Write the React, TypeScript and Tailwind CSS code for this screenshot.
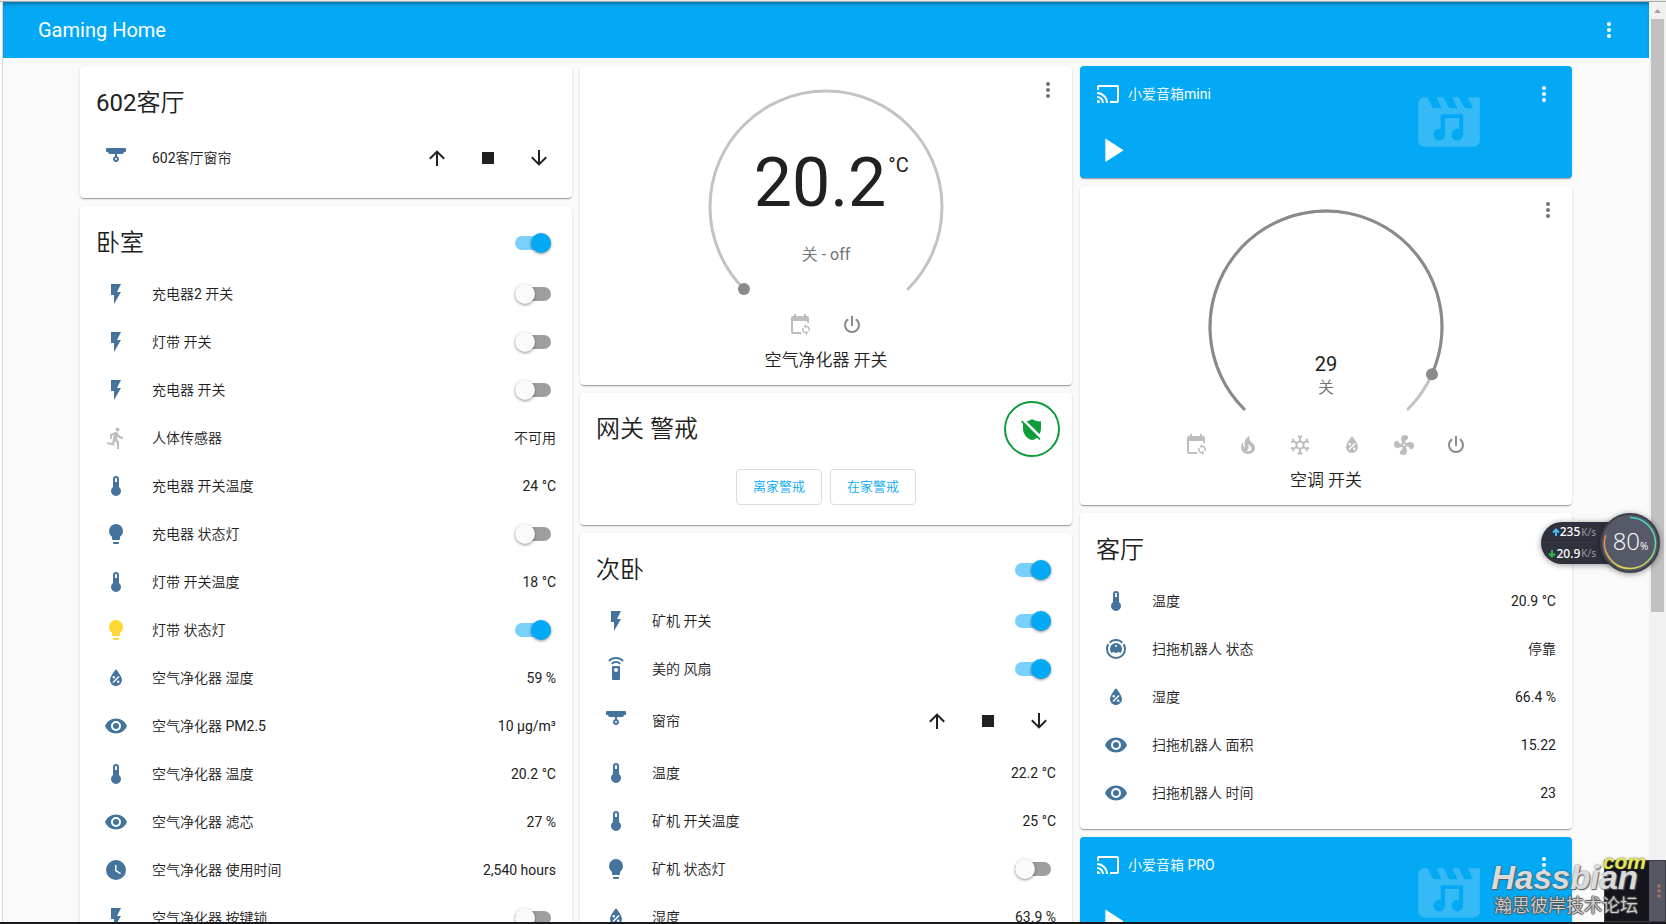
import React, { useState } from "react";

const ICONS = {
  flash: "M7,2V13H10V22L17,10H13L17,2H7Z",
  thermometer:
    "M15 13V5A3 3 0 0 0 9 5V13A5 5 0 1 0 15 13M12 4A1 1 0 0 1 13 5V8H11V5A1 1 0 0 1 12 4Z",
  bulb: "M12,2A7,7 0 0,0 5,9C5,11.38 6.19,13.47 8,14.74V17A1,1 0 0,0 9,18H15A1,1 0 0,0 16,17V14.74C17.81,13.47 19,11.38 19,9A7,7 0 0,0 12,2M9,21A1,1 0 0,0 10,22H14A1,1 0 0,0 15,21V20H9V21Z",
  water:
    "M12,3.25C12,3.25 6,10 6,14C6,17.32 8.69,20 12,20A6,6 0 0,0 18,14C18,10 12,3.25 12,3.25M14.47,9.97L15.53,11.03L9.53,17.03L8.47,15.97M9.75,10A1.25,1.25 0 0,1 11,11.25A1.25,1.25 0 0,1 9.75,12.5A1.25,1.25 0 0,1 8.5,11.25A1.25,1.25 0 0,1 9.75,10M14.25,14.5A1.25,1.25 0 0,1 15.5,15.75A1.25,1.25 0 0,1 14.25,17A1.25,1.25 0 0,1 13,15.75A1.25,1.25 0 0,1 14.25,14.5Z",
  eye: "M12,9A3,3 0 0,0 9,12A3,3 0 0,0 12,15A3,3 0 0,0 15,12A3,3 0 0,0 12,9M12,17A5,5 0 0,1 7,12A5,5 0 0,1 12,7A5,5 0 0,1 17,12A5,5 0 0,1 12,17M12,4.5C7,4.5 2.73,7.61 1,12C2.73,16.39 7,19.5 12,19.5C17,19.5 21.27,16.39 23,12C21.27,7.61 17,4.5 12,4.5Z",
  clock:
    "M12,2A10,10 0 0,0 2,12A10,10 0 0,0 12,22A10,10 0 0,0 22,12A10,10 0 0,0 12,2M16.2,16.2L11,13V7H12.5V12.2L17,14.9L16.2,16.2Z",
  run: "M13.5,5.5C14.59,5.5 15.5,4.58 15.5,3.5C15.5,2.38 14.59,1.5 13.5,1.5C12.39,1.5 11.5,2.38 11.5,3.5C11.5,4.58 12.39,5.5 13.5,5.5M9.89,19.38L10.89,15L13,17V23H15V15.5L12.89,13.5L13.5,10.5C14.79,12 16.79,13 19,13V11C17.09,11 15.5,10 14.69,8.58L13.69,7C13.29,6.38 12.69,6 12,6C11.69,6 11.5,6.08 11.19,6.08L6,8.28V13H8V9.58L9.79,8.88L8.19,17L3.29,16L2.89,18L9.89,19.38Z",
  remote:
    "M12,0C8.96,0 6.21,1.23 4.22,3.22L5.63,4.63C7.26,3 9.5,2 12,2C14.5,2 16.74,3 18.36,4.64L19.77,3.23C17.79,1.23 15.04,0 12,0M7.05,6.05L8.46,7.46C9.37,6.56 10.62,6 12,6C13.38,6 14.63,6.56 15.54,7.46L16.95,6.05C15.68,4.78 13.93,4 12,4C10.07,4 8.32,4.78 7.05,6.05M12,15A2,2 0 0,1 10,13A2,2 0 0,1 12,11A2,2 0 0,1 14,13A2,2 0 0,1 12,15M15,9H9A1,1 0 0,0 8,10V22A1,1 0 0,0 9,23H15A1,1 0 0,0 16,22V10A1,1 0 0,0 15,9Z",
  blinds:
    "M3,2H21A1,1 0 0,1 22,3V5A1,1 0 0,1 21,6H20A2,2 0 0,1 18,8H13V10.17A3,3 0 1,1 11,10.17V8H6A2,2 0 0,1 4,6H3A1,1 0 0,1 2,5V3A1,1 0 0,1 3,2M12,12A1,1 0 0,0 11,13A1,1 0 0,0 12,14A1,1 0 0,0 13,13A1,1 0 0,0 12,12Z",
  vacuum:
    "M12,2C14.65,2 17.19,3.06 19.07,4.93L17.65,6.35C16.15,4.85 14.12,4 12,4C9.88,4 7.84,4.84 6.35,6.35L4.93,4.93C6.81,3.06 9.35,2 12,2M3.66,6.5L5.11,7.94C4.39,9.17 4,10.57 4,12A8,8 0 0,0 12,20A8,8 0 0,0 20,12C20,10.57 19.61,9.17 18.88,7.94L20.34,6.5C21.42,8.12 22,10.04 22,12A10,10 0 0,1 12,22A10,10 0 0,1 2,12C2,10.04 2.58,8.12 3.66,6.5M12,6A6,6 0 0,1 18,12C18,13.59 17.37,15.12 16.24,16.24L14.83,14.83C14.08,15.58 13.06,16 12,16C10.94,16 9.92,15.58 9.17,14.83L7.76,16.24C6.63,15.12 6,13.59 6,12A6,6 0 0,1 12,6M12,8A1,1 0 0,0 11,9A1,1 0 0,0 12,10A1,1 0 0,0 13,9A1,1 0 0,0 12,8Z",
  up: "M13,20H11V8L5.5,13.5L4.08,12.08L12,4.16L19.92,12.08L18.5,13.5L13,8V20Z",
  down: "M11,4H13V16L18.5,10.5L19.92,11.92L12,19.84L4.08,11.92L5.5,10.5L11,16V4Z",
  stop: "M18,18H6V6H18V18Z",
  calendar:
    "M18 11V12.5C21.19 12.5 23.09 16.05 21.33 18.71L20.24 17.62C21.06 15.96 19.85 14 18 14V15.5L15.75 13.25L18 11M18 22V20.5C14.81 20.5 12.91 16.95 14.67 14.29L15.76 15.38C14.94 17.04 16.15 19 18 19V17.5L20.25 19.75L18 22M19 3H18V1H16V3H8V1H6V3H5C3.89 3 3 3.9 3 5V19C3 20.11 3.9 21 5 21H14C13.36 20.45 12.86 19.77 12.5 19H5V8H19V9.59C19.71 9.7 20.39 9.94 21 10.31V5C21 3.9 20.11 3 19 3Z",
  fire: "M17.66 11.2C17.43 10.9 17.15 10.64 16.89 10.38C16.22 9.78 15.46 9.35 14.82 8.72C13.33 7.26 13 4.85 13.95 3C13 3.23 12.17 3.75 11.46 4.32C8.87 6.4 7.85 10.07 9.07 13.22C9.11 13.32 9.15 13.42 9.15 13.55C9.15 13.77 9 13.97 8.8 14.05C8.57 14.15 8.33 14.09 8.14 13.93C8.08 13.88 8.04 13.83 8 13.76C6.87 12.33 6.69 10.28 7.45 8.64C5.78 10 4.87 12.3 5 14.47C5.06 14.97 5.12 15.47 5.29 15.97C5.43 16.57 5.7 17.17 6 17.7C7.08 19.43 8.95 20.67 10.96 20.92C13.1 21.19 15.39 20.8 17.03 19.32C18.86 17.66 19.5 15 18.56 12.72L18.43 12.46C18.22 12 17.66 11.2 17.66 11.2M14.5 17.5C14.22 17.74 13.76 18 13.4 18.1C12.28 18.5 11.16 17.94 10.5 17.28C11.69 17 12.4 16.12 12.61 15.23C12.78 14.43 12.46 13.77 12.33 13C12.21 12.26 12.23 11.63 12.5 10.94C12.69 11.32 12.89 11.7 13.13 12C13.9 13 15.11 13.44 15.37 14.8C15.41 14.94 15.43 15.08 15.43 15.23C15.46 16.05 15.1 16.95 14.5 17.5H14.5Z",
  snow: "M20.79,13.95L18.46,14.57L16.46,13.44V10.56L18.46,9.43L20.79,10.05L21.31,8.12L19.54,7.65L20,5.88L18.07,5.36L17.45,7.69L15.45,8.82L13,7.38V5.12L14.71,3.41L13.29,2L12,3.29L10.71,2L9.29,3.41L11,5.12V7.38L8.5,8.82L6.5,7.69L5.92,5.36L4,5.88L4.47,7.65L2.7,8.12L3.22,10.05L5.55,9.43L7.55,10.56V13.45L5.55,14.58L3.22,13.96L2.7,15.89L4.47,16.36L4,18.12L5.93,18.64L6.55,16.31L8.55,15.18L11,16.62V18.88L9.29,20.59L10.71,22L12,20.71L13.29,22L14.7,20.59L13,18.88V16.62L15.5,15.17L17.5,16.3L18.12,18.63L20,18.12L19.53,16.35L21.3,15.88L20.79,13.95M9.5,10.56L12,9.11L14.5,10.56V13.44L12,14.89L9.5,13.44V10.56Z",
  fan: "M12,11A1,1 0 0,0 11,12A1,1 0 0,0 12,13A1,1 0 0,0 13,12A1,1 0 0,0 12,11M12.5,2C17,2 17.11,5.57 14.75,6.75C13.76,7.24 13.32,8.29 13.13,9.22C13.61,9.42 14.03,9.73 14.35,10.13C18.05,8.13 22.03,8.92 22.03,12.5C22.03,17 18.46,17.1 17.28,14.73C16.78,13.74 15.72,13.3 14.79,13.11C14.59,13.59 14.28,14 13.88,14.34C15.87,18.03 15.08,22 11.5,22C7,22 6.91,18.42 9.27,17.24C10.25,16.75 10.69,15.71 10.89,14.79C10.4,14.59 9.97,14.27 9.65,13.87C5.96,15.85 2,15.07 2,11.5C2,7 5.56,6.89 6.74,9.26C7.24,10.25 8.29,10.68 9.22,10.87C9.41,10.39 9.73,9.97 10.14,9.65C8.15,5.96 8.94,2 12.5,2Z",
  power:
    "M16.56,5.44L15.11,6.89C16.84,7.94 18,9.83 18,12A6,6 0 0,1 12,18A6,6 0 0,1 6,12C6,9.83 7.16,7.94 8.88,6.88L7.44,5.44C5.36,6.88 4,9.28 4,12A8,8 0 0,0 12,20A8,8 0 0,0 20,12C20,9.28 18.64,6.88 16.56,5.44M13,3H11V13H13",
  shieldOff:
    "M12,2C14,3.6 17,4.5 21,4.5V11C21,13.3 20.5,15.4 19.4,17.1L6.4,4.3C8.5,4 10.5,3.2 12,2M1,4.8L2.3,3.5L20.5,21.7L19.2,23L17,20.8C15.6,22 13.9,22.8 12,23C7,22 3,17 3,11.5V6.8Z",
  cast: "M1,10V12A9,9 0 0,1 10,21H12C12,14.92 7.07,10 1,10M1,14V16A5,5 0 0,1 6,21H8A7,7 0 0,0 1,14M1,18V21H4A3,3 0 0,0 1,18M21,3H3C1.89,3 1,3.89 1,5V8H3V5H21V19H14V21H21A2,2 0 0,0 23,19V5C23,3.89 22.1,3 21,3Z",
  play: "M8,5.14V19.14L19,12.14L8,5.14Z",
  dots: "M12,16A2,2 0 0,1 14,18A2,2 0 0,1 12,20A2,2 0 0,1 10,18A2,2 0 0,1 12,16M12,10A2,2 0 0,1 14,12A2,2 0 0,1 12,14A2,2 0 0,1 10,12A2,2 0 0,1 12,10M12,4A2,2 0 0,1 14,6A2,2 0 0,1 12,8A2,2 0 0,1 10,6A2,2 0 0,1 12,4Z",
  movieMusic:
    "M18,4L19.8,7.5H17L15.2,4H13L14.8,7.5H12L10.2,4H8L9.6,7.5H6.8L5,4H4A2,2 0 0,0 2,6V18A2,2 0 0,0 4,20H20A2,2 0 0,0 22,18V4H18M9.3,9.5H16.6V16A1.9,1.9 0 1,1 15.3,14.3V10.7H10.7V16A1.9,1.9 0 1,1 9.3,14.3V9.5Z",
};

type IconName = keyof typeof ICONS;

function Icon({ name, className = "size-6" }: { name: IconName; className?: string }) {
  return (
    <svg viewBox="0 0 24 24" className={`shrink-0 fill-current ${className}`} aria-hidden="true">
      <path fillRule={name === "movieMusic" ? "evenodd" : "nonzero"} d={ICONS[name]} />
    </svg>
  );
}

function Card({ children, className = "bg-white" }: { children: React.ReactNode; className?: string }) {
  return (
    <section
      className={`relative rounded-[4px] shadow-[0_2px_1px_-1px_rgba(0,0,0,0.2),0_1px_1px_0_rgba(0,0,0,0.14),0_1px_3px_0_rgba(0,0,0,0.12)] ${className}`}
    >
      {children}
    </section>
  );
}

function Toggle({ label, initial }: { label: string; initial: boolean }) {
  const [on, setOn] = useState(initial);
  return (
    <label className="relative mr-[5px] flex h-5 w-9 shrink-0 cursor-pointer items-center">
      <input
        type="checkbox"
        className="peer sr-only"
        checked={on}
        onChange={() => setOn(!on)}
        aria-label={label}
      />
      <span className="h-[14px] w-9 rounded-full bg-[#9e9e9e] peer-checked:bg-[#79d1fa]" />
      <span className="absolute left-0 size-5 rounded-full bg-[#fafafa] shadow-[0_1px_3px_rgba(0,0,0,0.45)] peer-checked:left-4 peer-checked:bg-[#03a9f4]" />
    </label>
  );
}

function CardTitle({ title, toggle }: { title: string; toggle?: boolean }) {
  return (
    <header className="flex h-[68px] items-center justify-between px-4 pt-[6px]">
      <h2 className="text-2xl font-normal">{title}</h2>
      {toggle && <Toggle label={title} initial />}
    </header>
  );
}

type Row = {
  icon: IconName;
  name: string;
  state?: string;
  on?: boolean;
  cover?: boolean;
  tone?: string;
};

function CoverControls({ name }: { name: string }) {
  const actions: [IconName, string][] = [
    ["up", "打开"],
    ["stop", "停止"],
    ["down", "关闭"],
  ];
  return (
    <div className="-mr-[7px] flex gap-[3px]">
      {actions.map(([icon, label]) => (
        <button key={icon} type="button" aria-label={`${name} ${label}`} className="grid size-12 place-items-center">
          <Icon name={icon} />
        </button>
      ))}
    </div>
  );
}

function EntityRow({ row }: { row: Row }) {
  return (
    <li className="flex min-h-10 items-center text-sm">
      <span className={`grid w-10 shrink-0 place-items-center ${row.tone ?? "text-[#44739e]"}`}>
        <Icon name={row.icon} />
      </span>
      <span className="min-w-0 flex-1 truncate pl-4">{row.name}</span>
      {row.cover && <CoverControls name={row.name} />}
      {row.state && <span>{row.state}</span>}
      {row.on !== undefined && <Toggle label={row.name} initial={row.on} />}
    </li>
  );
}

function EntitiesCard({ title, toggle, rows }: { title: string; toggle?: boolean; rows: Row[] }) {
  return (
    <Card>
      <CardTitle title={title} toggle={toggle} />
      <ul className="flex flex-col gap-2 px-4 pb-4">
        {rows.map((row) => (
          <EntityRow key={row.name} row={row} />
        ))}
      </ul>
    </Card>
  );
}

function MenuButton({ className = "" }: { className?: string }) {
  return (
    <button type="button" aria-label="更多" className={`grid size-12 place-items-center ${className}`}>
      <Icon name="dots" />
    </button>
  );
}

const R = 116;
const CENTER = 117;

function polar(degrees: number) {
  const a = (degrees * Math.PI) / 180;
  return { x: CENTER + R * Math.cos(a), y: CENTER + R * Math.sin(a) };
}

function arc(from: number, to: number) {
  const a = polar(from);
  const b = polar(to);
  return `M${a.x} ${a.y}A${R} ${R} 0 ${to - from > 180 ? 1 : 0} 1 ${b.x} ${b.y}`;
}

function ThermostatCard({
  name,
  knob,
  modes,
  children,
}: {
  name: string;
  knob: number;
  modes: [IconName, string][];
  children: React.ReactNode;
}) {
  const k = polar(knob);
  return (
    <Card>
      <MenuButton className="absolute top-0 right-0 text-[#727272]" />
      <div className="flex flex-col items-center pt-6 pb-[14px]">
        <div className="grid h-[211px] w-[234px]">
          <svg
            viewBox="0 0 234 211"
            className="col-start-1 row-start-1 h-[211px] w-[234px] overflow-visible"
            fill="none"
            strokeWidth="3"
            strokeLinecap="round"
            aria-hidden="true"
          >
            <path d={arc(135, 405)} stroke="#c3c3c3" />
            {knob > 135 && <path d={arc(135, knob)} stroke="#8a8a8a" />}
            <circle cx={k.x} cy={k.y} r="6" fill="#8a8a8a" />
          </svg>
          <div className="col-start-1 row-start-1 flex flex-col items-center">{children}</div>
        </div>
        <div className="flex gap-1">
          {modes.map(([icon, label], i) => (
            <button
              key={icon}
              type="button"
              aria-label={label}
              className={`grid size-12 place-items-center ${i === modes.length - 1 ? "text-[#8a8a8a]" : "text-[#bdbdbd]"}`}
            >
              <Icon name={icon} />
            </button>
          ))}
        </div>
        <h3 className="text-[17px] leading-[22px] font-normal">{name}</h3>
      </div>
    </Card>
  );
}

function MediaCard({ name }: { name: string }) {
  return (
    <Card className="h-28 bg-[#03a9f4] text-white">
      <Icon name="movieMusic" className="absolute top-[19px] right-[86px] size-[74px] opacity-20" />
      <div className="flex items-center pt-1 pl-4">
        <Icon name="cast" />
        <span className="flex-1 pl-2 text-sm">{name}</span>
        <MenuButton className="mr-1" />
      </div>
      <button type="button" aria-label={`播放 ${name}`} className="mt-3 ml-3 block">
        <Icon name="play" className="size-10" />
      </button>
    </Card>
  );
}

function AlarmCard() {
  return (
    <Card className="flex h-[132px] flex-col bg-white">
      <header className="flex items-center justify-between pt-2 pr-3 pl-4">
        <h2 className="text-2xl font-normal">网关 警戒</h2>
        <span className="grid size-14 place-items-center rounded-full border-2 border-[#0f9d3a] text-[#0f9d3a]">
          <Icon name="shieldOff" />
        </span>
      </header>
      <div className="mt-3 flex justify-center gap-2">
        {["离家警戒", "在家警戒"].map((label) => (
          <button
            key={label}
            type="button"
            className="h-9 rounded-[4px] border border-[#dcdcdc] px-4 text-[13px] text-[#03a9f4]"
          >
            {label}
          </button>
        ))}
      </div>
    </Card>
  );
}

const livingCurtain: Row[] = [{ icon: "blinds", name: "602客厅窗帘", cover: true }];

const bedroom: Row[] = [
  { icon: "flash", name: "充电器2 开关", on: false },
  { icon: "flash", name: "灯带 开关", on: false },
  { icon: "flash", name: "充电器 开关", on: false },
  { icon: "run", name: "人体传感器", state: "不可用", tone: "text-[#bdbdbd]" },
  { icon: "thermometer", name: "充电器 开关温度", state: "24 °C" },
  { icon: "bulb", name: "充电器 状态灯", on: false },
  { icon: "thermometer", name: "灯带 开关温度", state: "18 °C" },
  { icon: "bulb", name: "灯带 状态灯", on: true, tone: "text-[#fdd835]" },
  { icon: "water", name: "空气净化器 湿度", state: "59 %" },
  { icon: "eye", name: "空气净化器 PM2.5", state: "10 µg/m³" },
  { icon: "thermometer", name: "空气净化器 温度", state: "20.2 °C" },
  { icon: "eye", name: "空气净化器 滤芯", state: "27 %" },
  { icon: "clock", name: "空气净化器 使用时间", state: "2,540 hours" },
  { icon: "flash", name: "空气净化器 按键锁", on: false },
];

const secondBedroom: Row[] = [
  { icon: "flash", name: "矿机 开关", on: true },
  { icon: "remote", name: "美的 风扇", on: true },
  { icon: "blinds", name: "窗帘", cover: true },
  { icon: "thermometer", name: "温度", state: "22.2 °C" },
  { icon: "thermometer", name: "矿机 开关温度", state: "25 °C" },
  { icon: "bulb", name: "矿机 状态灯", on: false },
  { icon: "water", name: "湿度", state: "63.9 %" },
];

const livingRoom: Row[] = [
  { icon: "thermometer", name: "温度", state: "20.9 °C" },
  { icon: "vacuum", name: "扫拖机器人 状态", state: "停靠" },
  { icon: "water", name: "湿度", state: "66.4 %" },
  { icon: "eye", name: "扫拖机器人 面积", state: "15.22" },
  { icon: "eye", name: "扫拖机器人 时间", state: "23" },
];

function SpeedLine({ value, up }: { value: string; up?: boolean }) {
  return (
    <div className="flex h-[21px] items-center justify-end">
      <svg
        viewBox="0 0 8 8"
        className={`size-2 fill-none stroke-2 ${up ? "stroke-[#4db8f5]" : "stroke-[#2fb344]"}`}
        aria-hidden="true"
      >
        <path d={up ? "M4 8V1.5M1 4.5L4 1.5L7 4.5" : "M4 0V6.5M1 3.5L4 6.5L7 3.5"} />
      </svg>
      <span className="text-[12px] font-medium text-white">{value}</span>
      <span className="pl-px text-[10px] text-[#9a9ca6]">K/s</span>
    </div>
  );
}

function SpeedWidget() {
  return (
    <aside className="absolute top-[513px] right-[6px] flex items-center font-['Noto_Sans',sans-serif]">
      <div className="-mr-8 h-[42px] w-[91px] divide-y divide-[#3c3f4a] rounded-l-full bg-[#2f323c] pr-9 shadow-[0_1px_6px_rgba(0,0,0,0.4)]">
        <SpeedLine value="235" up />
        <SpeedLine value="20.9" />
      </div>
      <div className="relative grid size-[60px] place-items-center rounded-full border-2 border-[#3d404b] bg-[#565a68] text-white shadow-[0_1px_6px_rgba(0,0,0,0.4)]">
        <svg viewBox="0 0 60 60" className="absolute size-[60px] fill-none stroke-[1.5]" aria-hidden="true">
          <defs>
            <linearGradient id="ring-right" x1="0" y1="0" x2="0" y2="1">
              <stop offset="0" stopColor="#3fd8d0" />
              <stop offset="0.5" stopColor="#5fdc9a" />
              <stop offset="1" stopColor="#d8dc50" />
            </linearGradient>
            <linearGradient id="ring-left" x1="0" y1="0" x2="0" y2="1">
              <stop offset="0" stopColor="#f07a50" />
              <stop offset="1" stopColor="#e8d848" />
            </linearGradient>
          </defs>
          <path d="M30 4.500A25.500 25.500 0 0 1 30 55.500" stroke="url(#ring-right)" />
          <path d="M30 55.500A25.500 25.500 0 0 1 5.700 22" stroke="url(#ring-left)" />
        </svg>
        <span className="relative flex items-baseline pl-px font-['Open_Sans',sans-serif] leading-6">
          <span className="text-2xl leading-6 font-light">80</span>
          <span className="text-[10px]">%</span>
        </span>
      </div>
    </aside>
  );
}

function Watermark() {
  return (
    <>
      <div className="absolute right-0 bottom-0 flex h-[62px] w-[62px] border border-[#3a3b44] bg-[#14151d]">
        <div className="ml-auto grid w-4 place-items-center bg-[#555763] text-[#b0705f]">
          <Icon name="dots" className="size-5" />
        </div>
      </div>
      <div className="absolute right-7 bottom-1 flex flex-col items-end whitespace-nowrap">
        <span className="-mr-2 -mb-3 font-['Liberation_Sans',sans-serif] text-[21px] leading-6 font-bold text-[#e4e653] italic [text-shadow:0_0_2px_#555]">
          com
        </span>
        <span className="font-['Liberation_Sans',sans-serif] text-[33px] leading-8 font-bold text-white/80 italic [text-shadow:0_0_2px_#444,1px_1px_1px_#666]">
          Hassbian
        </span>
        <span className="text-[18px] leading-6 font-medium text-[#d0d0d0] [text-shadow:1px_0_1px_#555,-1px_0_1px_#555,0_1px_1px_#555,0_-1px_1px_#555]">
          瀚思彼岸技术论坛
        </span>
      </div>
    </>
  );
}

export default function App() {
  return (
    <div className="relative flex h-screen flex-col overflow-hidden border-b-2 border-[#17171c] bg-[#fafafa] font-[Roboto,'Noto_Sans_CJK_SC_DemiLight','Noto_Sans_CJK_SC',sans-serif] text-[#212121]">
      <div className="h-[2px] shrink-0 border-b border-[#a8a8a8] bg-[#ececec]" />
      <div className="flex min-h-0 flex-1">
        <div className="w-[3px] shrink-0 border-r border-[#d8d8d8] bg-white" />
        <div className="min-w-0 flex-1">
          <header className="flex h-14 items-center justify-between bg-[#03a9f4] pr-4 pl-[35px] text-white shadow-[inset_0_4px_4px_-2px_rgba(0,0,0,0.35)]">
            <h1 className="text-xl font-normal">Gaming Home</h1>
            <MenuButton />
          </header>
          <main className="mx-auto grid max-w-[1500px] grid-cols-3 items-start gap-2 px-1 pt-2">
            <div className="flex flex-col gap-2">
              <EntitiesCard title="602客厅" rows={livingCurtain} />
              <EntitiesCard title="卧室" toggle rows={bedroom} />
            </div>
            <div className="flex flex-col gap-2">
              <ThermostatCard
                name="空气净化器 开关"
                knob={135}
                modes={[
                  ["calendar", "自动"],
                  ["power", "关"],
                ]}
              >
                <div className="relative mt-[59px] mr-3 text-[68px] leading-none">
                  20.2
                  <span className="absolute top-1 left-full pl-[2px] text-xl leading-6">°C</span>
                </div>
                <div className="mt-[26px] text-base text-[#727272]">关 - off</div>
              </ThermostatCard>
              <AlarmCard />
              <EntitiesCard title="次卧" toggle rows={secondBedroom} />
            </div>
            <div className="flex flex-col gap-2">
              <MediaCard name="小爱音箱mini" />
              <ThermostatCard
                name="空调 开关"
                knob={384}
                modes={[
                  ["calendar", "自动"],
                  ["fire", "制热"],
                  ["snow", "制冷"],
                  ["water", "除湿"],
                  ["fan", "送风"],
                  ["power", "关"],
                ]}
              >
                <div className="mt-[142px] text-xl leading-6">29</div>
                <div className="text-base text-[#727272]">关</div>
              </ThermostatCard>
              <EntitiesCard title="客厅" rows={livingRoom} />
              <MediaCard name="小爱音箱 PRO" />
            </div>
          </main>
        </div>
        <div className="flex w-[17px] shrink-0 flex-col items-center bg-[#f1f1f1]" aria-hidden="true">
          <svg viewBox="0 0 17 17" className="size-[17px] shrink-0 fill-[#a3a3a3]">
            <path d="M5 11L8.500 7L12 11Z" />
          </svg>
          <div className="h-[593px] w-[13px] bg-[#c1c1c1]" />
        </div>
      </div>
      <SpeedWidget />
      <Watermark />
    </div>
  );
}
